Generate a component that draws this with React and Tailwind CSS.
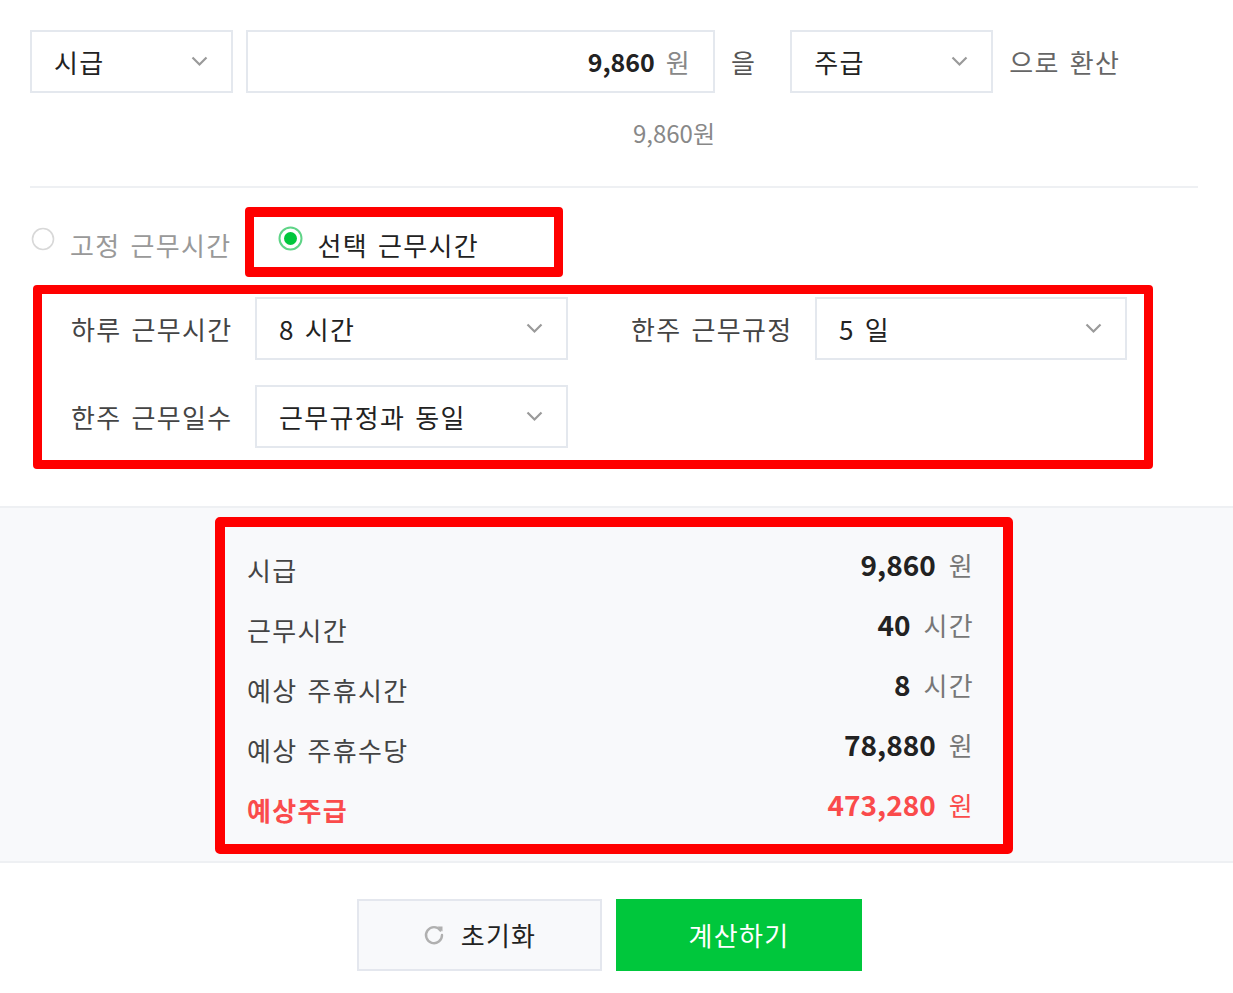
import React from "react";

const Chevron = () => (
  <svg width="17" height="11" viewBox="0 0 17 11" fill="none">
    <path d="M1.5 1.5 L8.5 8.5 L15.5 1.5" stroke="#9a9a9a" strokeWidth="2.2" />
  </svg>
);

function Select({ value, className }) {
  return (
    <div
      className={
        "flex items-center justify-between h-[63px] border-2 border-[#e4e8ee] bg-white pl-[22px] pr-[23px] " +
        className
      }
    >
      <span className="text-[26px] leading-none text-[#222]">{value}</span>
      <Chevron />
    </div>
  );
}

const RadioOff = () => (
  <svg width="24" height="24" viewBox="0 0 24 24">
    <circle cx="12" cy="12" r="10.5" fill="#fff" stroke="#d8d8d8" strokeWidth="1.6" />
  </svg>
);

const RadioOn = () => (
  <svg width="25" height="25" viewBox="0 0 25 25">
    <circle cx="12.5" cy="12.5" r="11" fill="#fff" stroke="#5fd487" strokeWidth="2" />
    <circle cx="12.5" cy="12.5" r="6.5" fill="#00c73c" />
  </svg>
);

const Refresh = () => (
  <svg width="22" height="22" viewBox="0 0 22 22" fill="none">
    <path d="M17.5 6.5 A8 8 0 1 0 19 11" stroke="#b0b0b0" strokeWidth="2.4" strokeLinecap="round" />
    <path d="M14.5 2.5 L19.5 2.5 L19.5 7.5 Z" fill="#b0b0b0" />
  </svg>
);

function Row({ label, num, unit, red }) {
  return (
    <div className="flex items-center justify-between h-[60px]">
      <span
        className={
          red
            ? "pb-[3px] text-[26px] leading-none font-bold text-[#fa4b4b]"
            : "pb-[3px] text-[26px] leading-none text-[#444]"
        }
      >
        {label}
      </span>
      <span className="flex items-baseline pb-[14px]">
        <span
          className={
            red
              ? "text-[28px] leading-none font-bold tracking-normal text-[#fa4b4b]"
              : "text-[28px] leading-none font-bold tracking-normal text-[#222]"
          }
        >
          {num}
        </span>
        <span
          className={
            red
              ? "ml-[13px] text-[26px] leading-none text-[#fa4b4b]"
              : "ml-[13px] text-[26px] leading-none text-[#777]"
          }
        >
          {unit}
        </span>
      </span>
    </div>
  );
}

export default function App() {
  return (
    <div className="w-[1233px] min-h-[993px] bg-white tracking-[1.3px] [word-spacing:3px] font-['Noto_Sans_CJK_KR','Noto_Sans',sans-serif]">
      <div className="pl-[30px]">
        {/* top row */}
        <div className="flex items-center pt-[30px]">
          <Select value="시급" className="w-[203px]" />
          <div className="ml-[13px] w-[469px] h-[63px] border-2 border-[#e4e8ee] flex items-center justify-end pr-[22px]">
            <span className="text-[25px] leading-none font-bold tracking-normal text-[#222]">9,860</span>
            <span className="ml-[11px] text-[26px] leading-none text-[#888]">원</span>
          </div>
          <span className="ml-[16px] text-[26px] leading-none text-[#555]">을</span>
          <Select value="주급" className="ml-[34px] w-[203px]" />
          <span className="ml-[16px] text-[26px] leading-none text-[#666]">으로 환산</span>
        </div>
        <div className="w-[685px] text-right mt-[25px] text-[24px] leading-[30px] tracking-normal text-[#888]">
          9,860원
        </div>
        <div className="mt-[38px] h-[2px] bg-[#eef0f3] w-[1168px]" />

        {/* radio row */}
        <div className="mt-[19px] flex items-center">
          <div className="ml-px flex items-center">
            <span className="-mt-[6px]">
              <RadioOff />
            </span>
            <span className="ml-[15px] pt-[6px] text-[26px] leading-none text-[#999]">고정 근무시간</span>
          </div>
          <div className="ml-[14px] w-[318px] h-[70px] border-[9px] border-y-[10px] border-[#ff0000] rounded-[4px] flex items-center pl-[24px]">
            <span className="-mt-[7px]">
              <RadioOn />
            </span>
            <span className="ml-[14px] pt-[6px] text-[26px] leading-none text-[#222]">선택 근무시간</span>
          </div>
        </div>

        {/* options box */}
        <div className="mt-[8px] ml-[3px] w-[1120px] border-[9px] border-[#ff0000] rounded-[4px] pl-[29px] pt-[3px] pb-[12px] flex flex-col gap-[25px]">
          <div className="flex items-center">
            <span className="w-[184px] text-[26px] leading-none text-[#444]">하루 근무시간</span>
            <Select value="8 시간" className="w-[313px]" />
            <span className="ml-[63px] w-[184px] text-[26px] leading-none text-[#444]">한주 근무규정</span>
            <Select value="5 일" className="w-[312px]" />
          </div>
          <div className="flex items-center">
            <span className="w-[184px] text-[26px] leading-none text-[#444]">한주 근무일수</span>
            <Select value="근무규정과 동일" className="w-[313px]" />
          </div>
        </div>
      </div>

      {/* summary */}
      <div className="mt-[37px] border-y-2 border-[#eef0f3] bg-[#f8f9fb] pt-[9px] pb-[7px]">
        <div className="ml-[215px] w-[798px] border-[10px] border-[#ff0000] rounded-[5px] pl-[22px] pr-[29px] pt-[14px] pb-[3px]">
          <Row label="시급" num="9,860" unit="원" />
          <Row label="근무시간" num="40" unit="시간" />
          <Row label="예상 주휴시간" num="8" unit="시간" />
          <Row label="예상 주휴수당" num="78,880" unit="원" />
          <Row label="예상주급" num="473,280" unit="원" red />
        </div>
      </div>

      {/* buttons */}
      <div className="mt-[36px] pl-[357px] flex gap-[14px]">
        <button className="w-[245px] h-[72px] border-2 border-[#e4e7ee] bg-[#f8f9fb] flex items-center justify-center gap-[16px]">
          <Refresh />
          <span className="text-[26px] leading-none text-[#222]">초기화</span>
        </button>
        <button className="w-[246px] h-[72px] bg-[#00c73c] flex items-center justify-center">
          <span className="text-[26px] leading-none text-white">계산하기</span>
        </button>
      </div>
    </div>
  );
}
